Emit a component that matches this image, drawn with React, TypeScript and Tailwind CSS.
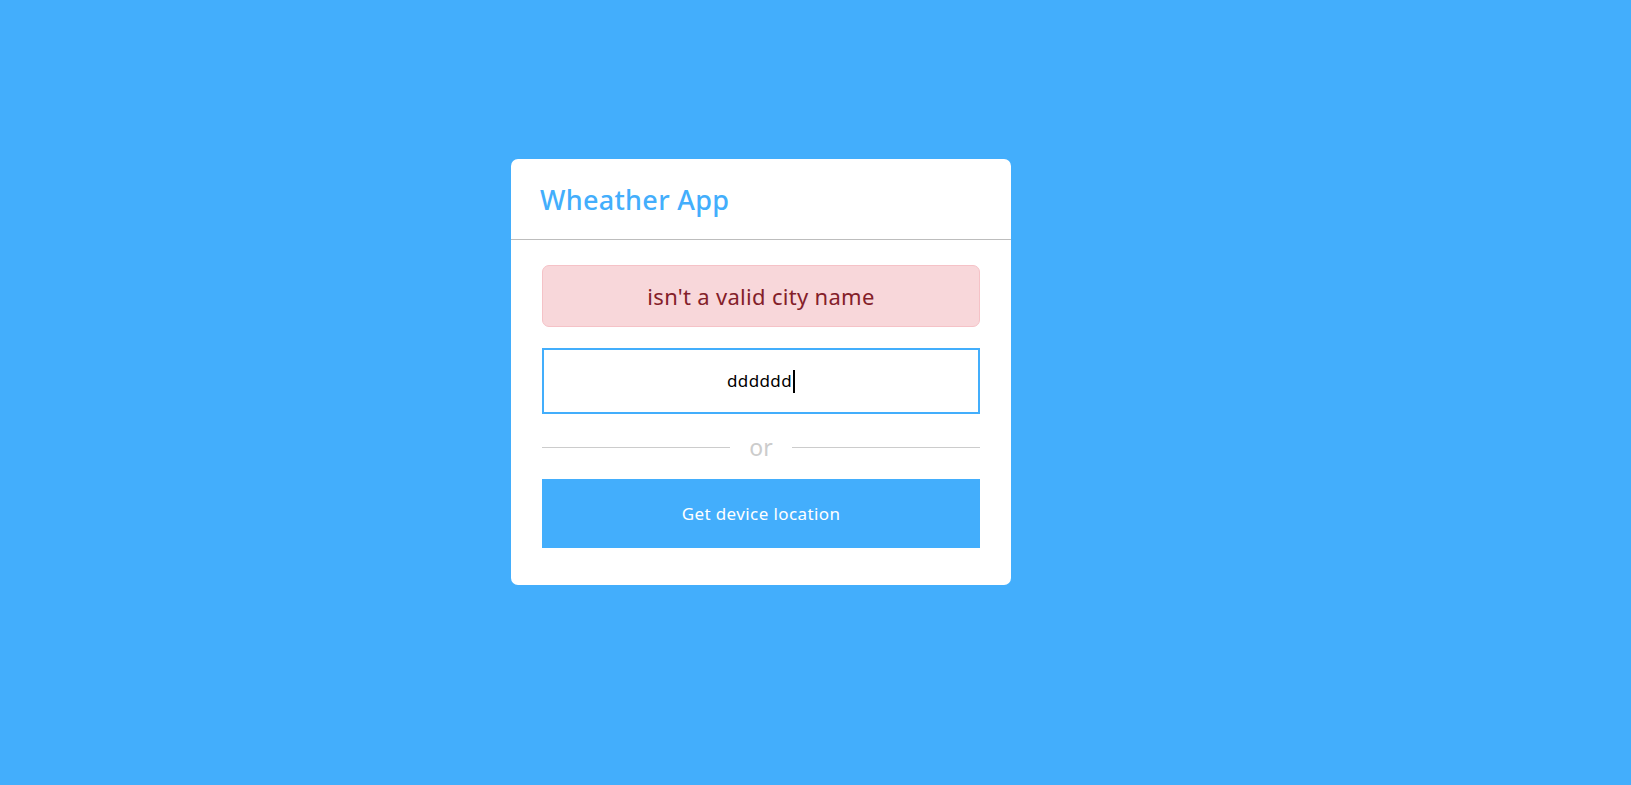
import React from 'react';

export default function App() {
  return (
    <div
      className="min-h-screen w-full bg-[#43aefc] pl-[511px] pt-[159px]"
      style={{ fontFamily: '"Noto Sans", "Liberation Sans", sans-serif' }}
    >
      <div className="w-[500px] bg-white rounded-[7px]">
        {/* Header */}
        <div className="h-[81px] flex items-center px-[29px] border-b border-[#bdbdbd]">
          <h3 className="text-[27px] font-medium text-[#43aefc] leading-none tracking-[0.3px]">Wheather App</h3>
        </div>

        {/* Body */}
        <div className="px-[31px] pt-[25px] pb-[37px] flex flex-col">
          <div className="h-[62px] rounded-[7px] bg-[#f8d7da] border border-[#f5c2c7] flex items-center justify-center text-[22px] text-[#842029] tracking-[0.3px]">
            isn't a valid city name
          </div>

          <div className="mt-[21px] h-[66px] border-2 border-[#43aefc] flex items-center justify-center text-[17px] text-black tracking-[0.4px]">
            <span>dddddd</span>
            <span className="w-[2px] h-[23px] bg-black ml-[1px]" />
          </div>

          <div className="mt-[16px] flex items-center h-[34px]">
            <div className="flex-1 h-px bg-[#cccccc]" />
            <span className="px-[19px] text-[23px] text-[#cccccc] leading-none">or</span>
            <div className="flex-1 h-px bg-[#cccccc]" />
          </div>

          <button className="mt-[15px] h-[69px] w-full bg-[#43aefc] text-white text-[17px] tracking-[0.4px]">
            Get device location
          </button>
        </div>
      </div>
    </div>
  );
}
